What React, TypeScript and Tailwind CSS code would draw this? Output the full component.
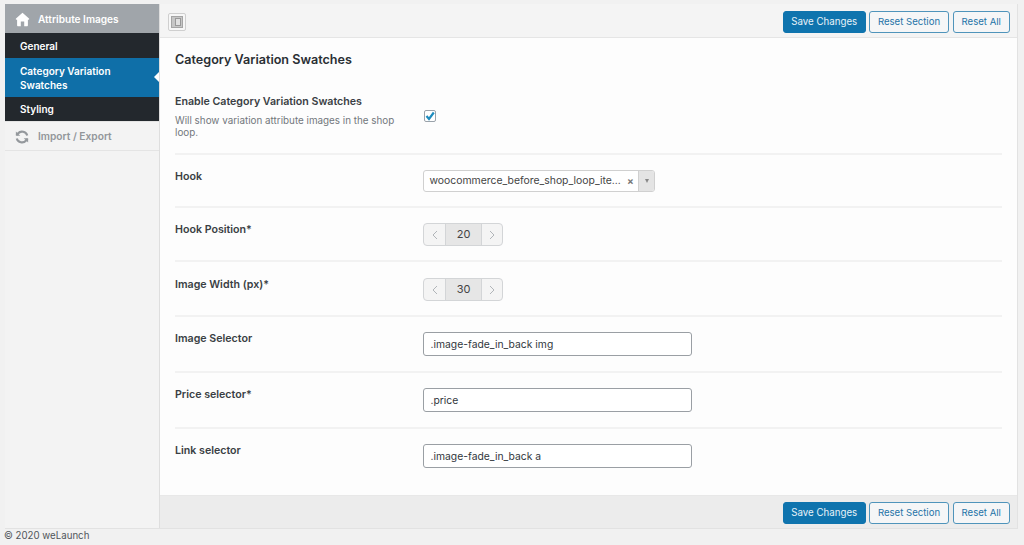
import React from "react";

const font = { fontFamily: '"Inter", "Liberation Sans", sans-serif' };

function Buttons() {
  return (
    <div className="flex justify-end gap-[3.5px]">
      <button className="h-[22px] w-[82.5px] rounded-[3px] bg-[#0f74ae] border border-[#0f74ae] text-[9.7px] leading-[20px] text-[#e8f2f8]">Save Changes</button>
      <button className="h-[22px] w-[80px] rounded-[3px] bg-[#f5f6f7] border border-[#4f94bb] text-[9.6px] leading-[20px] text-[#1f74a8]">Reset Section</button>
      <button className="h-[22px] w-[57.5px] rounded-[3px] bg-[#f5f6f7] border border-[#4f94bb] text-[9.6px] leading-[20px] text-[#1f74a8]">Reset All</button>
    </div>
  );
}

function Row({ label, h, children, desc, last }: { label: string; h: string; children?: React.ReactNode; desc?: string; last?: boolean }) {
  return (
    <div className={`flex ${h} ${last ? "" : "border-b-2 border-[#f2f2f2]"}`}>
      <div className="w-[248px] shrink-0">
        <div className="text-[10.65px] font-semibold leading-[14px] text-[#3a3f44]">{label}</div>
        {desc && <div className="mt-[5px] w-[228px] text-[9.85px] leading-[12px] text-[#72777c]">{desc}</div>}
      </div>
      {children}
    </div>
  );
}

function Spinner({ value }: { value: string }) {
  return (
    <div className="flex h-[23px] w-[80px] rounded-[4px] border border-[#d3d5d7] bg-[#f4f4f4]">
      <div className="flex w-[22px] items-center justify-center border-r border-[#d3d5d7]">
        <svg width="6" height="10" viewBox="0 0 6 10" fill="none" stroke="#a0a5aa" strokeWidth="0.8"><path d="M5 1 1 5l4 4" /></svg>
      </div>
      <div className="flex w-[35px] items-center justify-center bg-[#e6e6e6] text-[11px] text-[#444]">{value}</div>
      <div className="flex flex-1 items-center justify-center border-l border-[#d3d5d7]">
        <svg width="6" height="10" viewBox="0 0 6 10" fill="none" stroke="#a0a5aa" strokeWidth="0.8"><path d="m1 1 4 4-4 4" /></svg>
      </div>
    </div>
  );
}

function TextInput({ value }: { value: string }) {
  return (
    <div className="h-[24px] w-[269px] rounded-[3px] border border-[#9a9fa4] bg-white px-[6.5px] text-[10.35px] leading-[22px] text-[#32373c]">{value}</div>
  );
}

export default function App() {
  return (
    <div style={font} className="relative h-[545px] w-[1024px] overflow-hidden bg-[#f1f1f1]">
      <div className="ml-[5px] mt-[4px] flex h-[525px] w-[1013px] border-b border-[#e2e2e2] border-r">
        <aside className="w-[155px] shrink-0 border-r border-[#dedede] bg-[#f3f3f3]">
          <div className="flex h-[29px] items-center bg-[#a0a5aa] pl-[10px] pt-[2px]">
            <svg width="15" height="15" viewBox="0 0 15 15" fill="#fff" className="-mt-[1px]"><path d="M7.5.8 1 6.6c-.5.5-.2 1.2.5 1.2h.6v5.4c0 .6.4 1 1 1h2.7V9.4h3.4v4.8h2.7c.6 0 1-.4 1-1V7.8h.6c.7 0 1-.7.5-1.2z" /></svg>
            <span className="ml-[8px] text-[10.1px] font-semibold text-white">Attribute Images</span>
          </div>
          <div className="flex h-[25px] items-center bg-[#23282d] pl-[15px] pt-[1px] text-[10px] font-semibold text-white">General</div>
          <div className="relative flex h-[39px] items-center bg-[#0f6fa8] pl-[15px] text-[10px] font-semibold leading-[14px] text-white">
            <span>Category Variation<br />Swatches</span>
            <span className="absolute right-0 top-[14px] h-0 w-0 border-y-[5px] border-r-[5px] border-y-transparent border-r-white" />
          </div>
          <div className="flex h-[24px] items-center bg-[#23282d] pl-[15px] text-[10px] font-semibold text-white">Styling</div>
          <div className="flex h-[30px] items-center border-y border-y-[#e4e4e4] pl-[10px] pt-[2px]">
            <svg width="14" height="14" viewBox="0 0 24 24" fill="none" stroke="#94989c" strokeWidth="3.6" className="-mt-[1px]"><path d="M21 9.5A9.3 9.3 0 0 0 5 6L2.5 8.5" /><path d="M3 14.5A9.3 9.3 0 0 0 19 18l2.5-2.5" /><path d="M1.5 2.5v7.5H9" fill="#94989c" stroke="none" /><path d="M22.5 21.5V14H15" fill="#94989c" stroke="none" /></svg>
            <span className="ml-[9px] text-[10.2px] font-semibold text-[#92969a]">Import / Export</span>
          </div>
        </aside>
        <main className="flex min-w-0 flex-1 flex-col">
          <div className="flex h-[34px] items-center justify-between border-b border-[#e5e5e5] bg-[#f4f4f4] pl-[8px] pr-[7px] pt-[2px]">
            <div className="flex h-[18px] w-[18px] items-center justify-center rounded-[2px] border border-[#cfcfcf] bg-[#f7f7f7]">
              <div className="flex h-[12px] w-[12px] items-center justify-center border border-[#a5a5a5] bg-[#c6c6c6]">
                <div className="ml-[1px] h-[8px] w-[6px] border border-[#999] bg-[#e0e0e0]" />
              </div>
            </div>
            <Buttons />
          </div>
          <div className="flex-1 bg-[#fdfdfd] px-[15px] pt-[14px]">
            <h2 className="text-[12.6px] font-semibold leading-[16px] text-[#2a2f34]">Category Variation Swatches</h2>
            <div className="mt-[27px]">
              <Row label="Enable Category Variation Swatches" h="h-[60px]" desc="Will show variation attribute images in the shop loop.">
                <div className="ml-[1px] mt-[15px] flex h-[12px] w-[12px] items-center justify-center rounded-[2px] border border-[#9aa2aa] bg-white">
                  <svg width="10" height="10" viewBox="0 0 10 10" fill="none" stroke="#1e8cbe" strokeWidth="2.2" className="shrink-0"><path d="m1.5 5 2.5 3L8.8 1.5" /></svg>
                </div>
              </Row>
              <div className="pt-[15px]">
                <Row label="Hook" h="h-[38px]">
                  <div className="flex h-[22px] w-[232px] overflow-hidden rounded-[3px] border border-[#d0d0d0] bg-white">
                    <span className="w-[199px] whitespace-nowrap pl-[5.5px] text-[10.4px] leading-[20px] text-[#444]">woocommerce_before_shop_loop_ite...</span>
                    <span className="w-[15px] text-center text-[10px] font-bold leading-[20px] text-[#777]">×</span>
                    <span className="flex flex-1 items-center justify-center border-l border-[#d0d0d0] bg-[#e4e4e4]">
                      <span className="h-0 w-0 border-x-[2.5px] border-t-[4px] border-x-transparent border-t-[#888]" />
                    </span>
                  </div>
                </Row>
              </div>
              <div className="pt-[15px]"><Row label="Hook Position*" h="h-[39px]"><Spinner value="20" /></Row></div>
              <div className="pt-[16px]"><Row label="Image Width (px)*" h="h-[39px]"><Spinner value="30" /></Row></div>
              <div className="pt-[15px]"><Row label="Image Selector" h="h-[41px]"><TextInput value=".image-fade_in_back img" /></Row></div>
              <div className="pt-[15px]"><Row label="Price selector*" h="h-[41px]"><TextInput value=".price" /></Row></div>
              <div className="pt-[15px]"><Row label="Link selector" h="h-[40px]" last><TextInput value=".image-fade_in_back a" /></Row></div>
            </div>
          </div>
          <div className="flex h-[33px] items-center justify-end border-t border-[#e8e8e8] bg-[#ececec] pr-[7px] pt-[2px]">
            <Buttons />
          </div>
        </main>
      </div>
      <div className="pl-[4px] text-[9.7px] leading-[14px] text-[#50555a]">© 2020 weLaunch</div>
    </div>
  );
}
